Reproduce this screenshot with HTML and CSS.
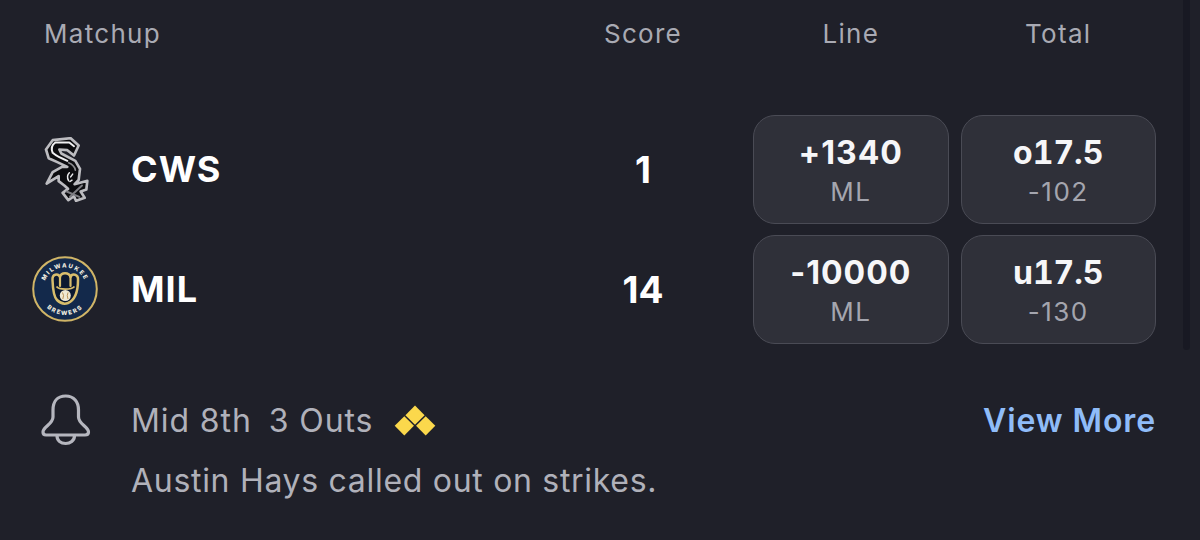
FILE: index.html
```html
<!DOCTYPE html>
<html lang="en">
<head>
<meta charset="utf-8">
<title>Matchup</title>
<link rel="stylesheet" href="styles.css">
</head>
<body>
<main class="card">
  <div class="board">
    <div class="head head-left">Matchup</div>
    <div class="head">Score</div>
    <div class="head">Line</div>
    <div class="head">Total</div>

    <div class="team">
      <div class="logo">
        <svg class="sox" viewBox="60 34.5 150 195" width="50" height="65" stroke-linecap="round" stroke-linejoin="round">
          <path d="M78 72L98 44L152 38L176 60L162 90L142 74L118 72L124 84L166 106L180 130L176 163L164 176L202 166L199 192L182 198L194 217L168 226L162 212L145 224L128 202L144 190L133 180L116 167L116 152L80 174L98 140L126 124L142 124L112 110L86 98Z" fill="#0c0c0f" stroke="#bcbcc0" stroke-width="8"/>
          <g fill="none">
            <path d="M162 62L148 51H106Q90 62 98 82Q112 94 142 106" stroke="#f0f0f2" stroke-width="6"/>
            <path d="M146 112Q164 120 166 134" stroke="#8a8a8e" stroke-width="5"/>
            <path d="M148 142Q138 152 146 166M158 146L152 154M156 164L150 168" stroke="#ececee" stroke-width="4.500"/>
            <path d="M140 198L178 214M186 180L150 214" stroke="#7c7c81" stroke-width="6"/>
          </g>
        </svg>
      </div>
      <span class="abbr">CWS</span>
    </div>
    <div class="score">1</div>
    <button class="odds"><span class="main">+1340</span><span class="sub">ML</span></button>
    <button class="odds"><span class="main total">o17.5</span><span class="sub">-102</span></button>

    <div class="team">
      <div class="logo">
        <svg class="brewers" viewBox="0 0 66 66" width="66" height="66">
          <circle cx="33" cy="33" r="31.800" fill="#13294b" stroke="#d0b567" stroke-width="2"/>
          <defs>
            <path id="arc-top" d="M11.500 33A21.500 21.500 0 0 1 54.500 33"/>
            <path id="arc-bottom" d="M7 33A26 26 0 0 0 59 33"/>
          </defs>
          <text class="ring-text"><textPath href="#arc-top" startOffset="50%" text-anchor="middle">MILWAUKEE</textPath></text>
          <text class="ring-text"><textPath href="#arc-bottom" startOffset="50%" text-anchor="middle">BREWERS</textPath></text>
          <path d="M20.500 24C20 18 26 17 28 21C29 16 37 16 38.500 21C40 17 46.500 18 46 24C46 36 43 44 36 47C32 48.500 28 47 25 44C22 41 20.800 32 20.500 24Z" fill="#0b1830" stroke="#d8bd6c" stroke-width="2.500" stroke-linejoin="round"/>
          <path d="M28 21V30M38.500 21V30" stroke="#d8bd6c" stroke-width="2.200" stroke-linecap="round" fill="none"/>
          <path d="M24.500 30.500C27 34 39.500 34 42.500 30.500" stroke="#d8bd6c" stroke-width="1.800" fill="none"/>
          <circle cx="33.300" cy="39.500" r="5.500" fill="#f0e9d4"/>
          <path d="M30.500 36.500Q32.500 39.500 30.800 43M36 36.500Q34.500 39.500 36 43" stroke="#b58a4a" stroke-width="0.900" fill="none"/>
        </svg>
      </div>
      <span class="abbr">MIL</span>
    </div>
    <div class="score">14</div>
    <button class="odds"><span class="main">-10000</span><span class="sub">ML</span></button>
    <button class="odds"><span class="main total">u17.5</span><span class="sub">-130</span></button>
  </div>

  <footer class="status">
    <svg class="bell" viewBox="0 0 52 54" width="52" height="54" fill="none" stroke="#b5b6be" stroke-width="3.200" stroke-linecap="round" stroke-linejoin="round">
      <path d="M25.700 3C17 3 13 9 13 17V24C13 31 3 34 3 39C3 41 4 42 6 42H45C47 42 48.500 41 48.500 39C48.500 34 38.500 31 38.500 24V17C38.500 9 34 3 25.700 3Z"/>
      <path d="M17 42.500C17 48 21 50.500 25.700 50.500C30 50.500 34.500 48 34.500 42.500"/>
    </svg>
    <div class="status-text">
      <div class="status-line">
        <span>Mid 8th</span><span>3 Outs</span>
        <svg class="bases" viewBox="1 0.500 39 29" width="42" height="31" fill="#fbd84c">
          <path d="M20.500 1L29.500 10L20.500 19L11.500 10Z"/>
          <path d="M10.500 11L19.500 20L10.500 29L1.500 20Z"/>
          <path d="M30.500 11L39.500 20L30.500 29L21.500 20Z"/>
        </svg>
        <a class="more" href="#">View More</a>
      </div>
      <div class="play">Austin Hays called out on strikes.</div>
    </div>
  </footer>
  <div class="scrollbar"></div>
</main>
</body>
</html>
```
FILE: styles.css
```css
* { box-sizing: border-box; }
html, body { margin: 0; height: 100%; }
body {
  background: #1f2029;
  color: #fff;
  font-family: Inter, "Liberation Sans", sans-serif;
  overflow: hidden;
}
.card {
  position: relative;
  width: 1200px;
  height: 540px;
  padding: 15px 44px 0 32px;
}
.board {
  display: grid;
  grid-template-columns: 1fr 196px 195.5px 195.5px;
  grid-template-rows: 88.5px 109px 109px;
  column-gap: 12px;
  row-gap: 11px;
}
.head {
  font-size: 26px;
  line-height: 38px;
  letter-spacing: 1.3px;
  color: #a9aab3;
  text-align: center;
}
.head-left { text-align: left; padding-left: 12px; }
.team { display: flex; align-items: center; gap: 33px; }
.logo { width: 66px; display: flex; justify-content: center; }
.logo svg { display: block; }
.ring-text {
  font-size: 6px;
  font-weight: 800;
  letter-spacing: 1.5px;
  fill: #f2eee0;
}
.abbr { font-size: 36px; font-weight: 700; letter-spacing: 1px; }
.score {
  display: flex;
  align-items: center;
  justify-content: center;
  font-size: 37px;
  font-weight: 700;
}
.odds {
  display: flex;
  flex-direction: column;
  align-items: center;
  justify-content: flex-start;
  padding: 17px 0 0;
  background: #2f3039;
  border: 1.5px solid #4a4b55;
  border-radius: 22px;
  font: inherit;
  color: inherit;
}
.main { font-size: 32px; font-weight: 700; line-height: 40px; letter-spacing: 1px; color: #f6f6f8; }
.total { font-variant-numeric: tabular-nums; letter-spacing: 0; }
.sub { font-size: 26px; line-height: 38px; letter-spacing: 1.5px; color: #a4a5ae; }
.status {
  display: flex;
  gap: 39px;
  margin: 49px 0 0 8px;
}
.bell { flex: none; }
.status-text { flex: 1; }
.status-line {
  display: flex;
  align-items: center;
  gap: 17px;
  height: 56px;
  font-size: 32px;
  letter-spacing: 0.9px;
  color: #b0b1ba;
}
.bases { margin-left: 4px; }
.more {
  margin-left: auto;
  font-weight: 600;
  color: #8fbcf8;
  text-decoration: none;
}
.play {
  margin-top: 7.5px;
  font-size: 32px;
  line-height: 50px;
  letter-spacing: 0.7px;
  color: #b0b1ba;
}
.scrollbar {
  position: absolute;
  top: 0;
  left: 1183px;
  width: 7px;
  height: 350px;
  border-radius: 0 0 4px 4px;
  background: #181923;
}
```
